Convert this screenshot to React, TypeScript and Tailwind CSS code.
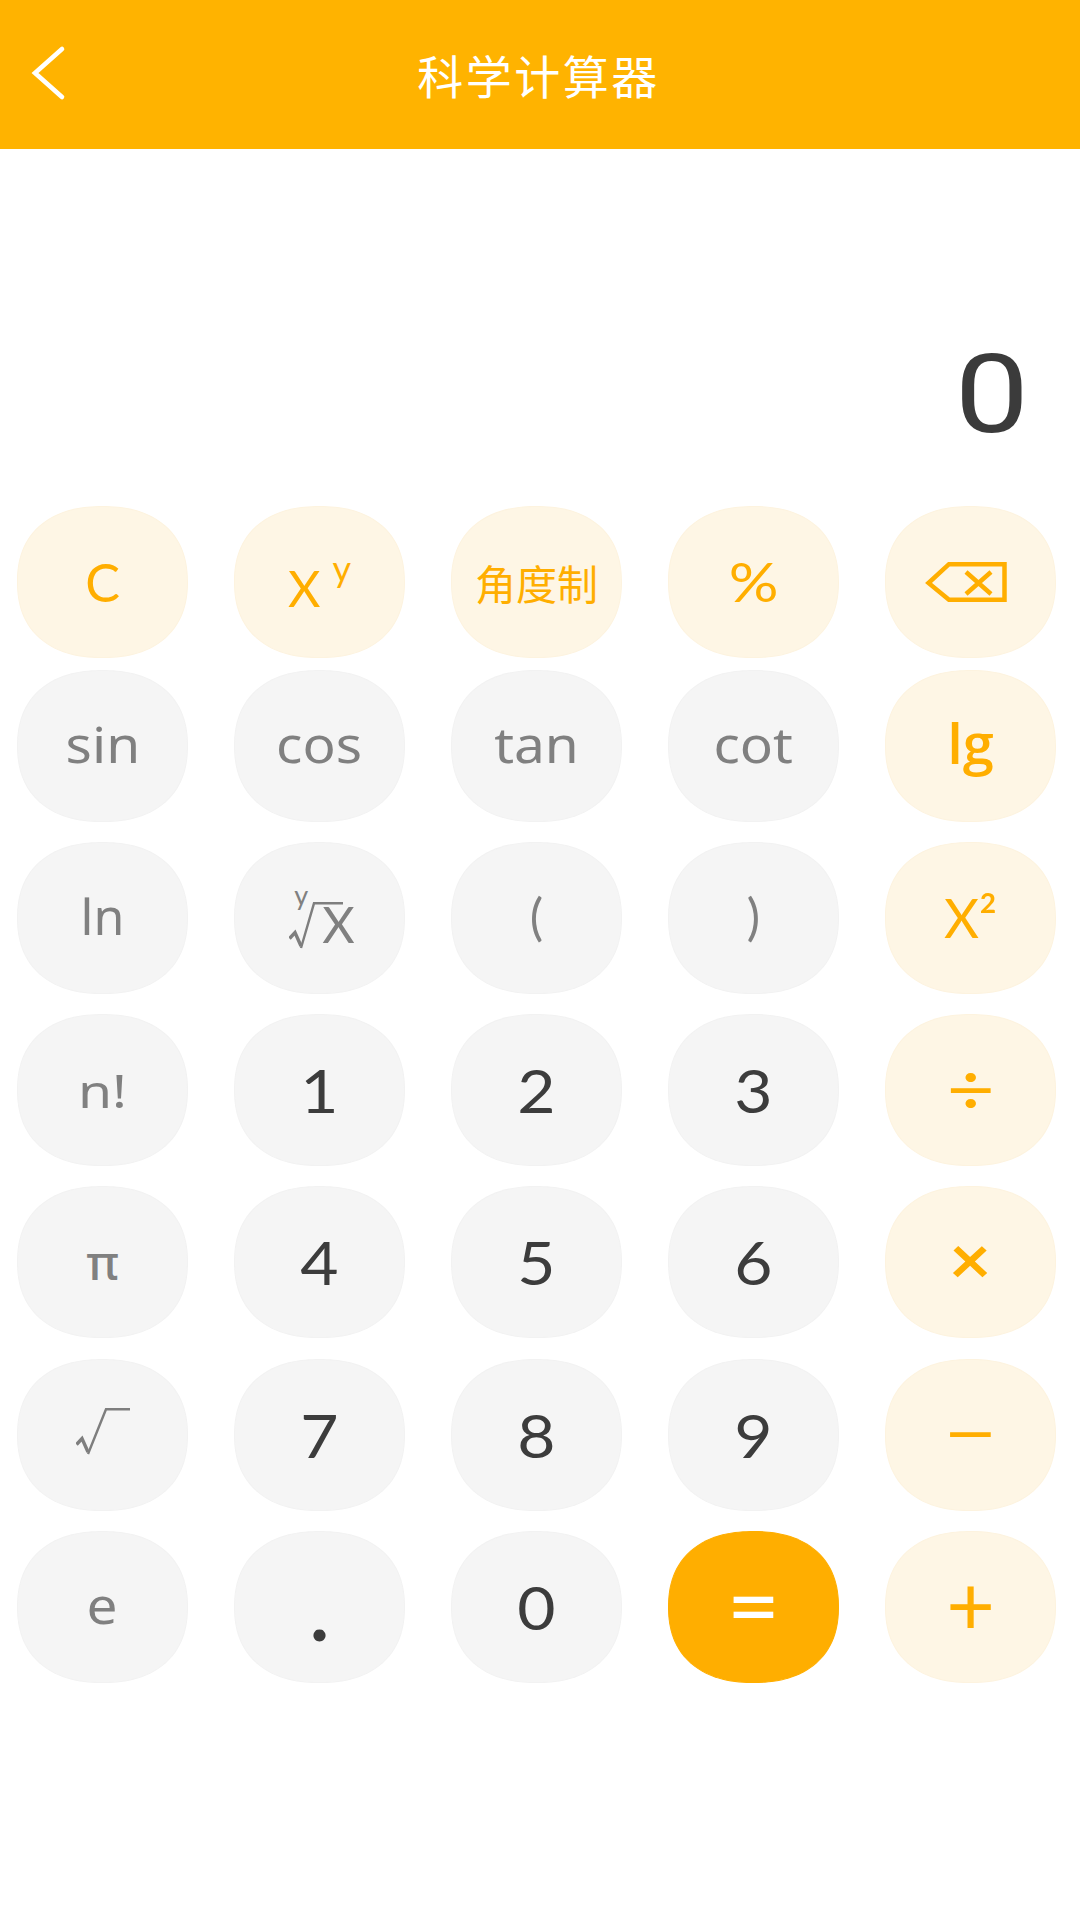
import React from "react";

const base =
  "w-[171px] h-[152px] rounded-[50%] [corner-shape:superellipse(1.2)] flex items-center justify-center border border-[#f2f2f2] leading-none";
const grey = `${base} bg-[#f5f5f5] text-[#808080]`;
const cream = `${base} bg-[#fef6e5] border-[#fdf3df] text-[#ffae00]`;
const dark = `${base} bg-[#f5f5f5] text-[#3c3c3c]`;
const lato = "font-['Lato','Noto_Sans',sans-serif]";
const noto = "font-['Noto_Sans','Lato',sans-serif]";
const open = "font-['Open_Sans','Noto_Sans',sans-serif]";

function Backspace() {
  return (
    <svg className="mr-[9px]" width="82" height="40" viewBox="0 0 82 40" fill="none" stroke="#ffae00" strokeWidth="4.5">
      <path d="M79.5 2.2H24L3.5 21L24 37.8H79.5Z" />
      <path d="M41 10L66 32M66 10L41 32" />
    </svg>
  );
}

function Root({ tick }: { tick: number }) {
  return (
    <svg width="54" height="48" viewBox="0 0 54 48" fill="none" stroke="#7e7e7e">
      <path d="M0.5 36.5L6 30.5L12 44" strokeWidth="3.4" />
      <path d={`M12 46L${tick} 1.3H54`} strokeWidth="2.4" />
    </svg>
  );
}

function Digit({ children }: { children: React.ReactNode }) {
  return (
    <button className={`${dark} ${lato} text-[60px]`}>
      <span className="inline-block scale-x-[1.1]">{children}</span>
    </button>
  );
}

function Wide({ children }: { children: React.ReactNode }) {
  return <span className="inline-block scale-x-[1.1] mb-[4px]">{children}</span>;
}

function App() {
  return (
    <div className="w-[1080px] h-[1920px] bg-white flex flex-col font-['Noto_Sans','Noto_Sans_CJK_SC',sans-serif]">
      <header className="relative h-[149px] bg-[#ffb300] flex items-center justify-center shrink-0">
        <svg className="absolute left-[31px] top-[45px]" width="36" height="56" viewBox="0 0 36 56" fill="none" stroke="#fff" strokeWidth="4.6" strokeLinecap="round">
          <path d="M31 4L4 28L31 52" />
        </svg>
        <h1 className="text-[46px] leading-none tracking-[2.5px] mb-[1px] mr-[3px] text-white font-['Noto_Sans_CJK_SC',sans-serif] font-normal">科学计算器</h1>
      </header>

      <section className="h-[357px] shrink-0 flex items-end justify-end pr-[57px] pb-[71px]">
        <span className="text-[110px] leading-[80px] h-[80px] text-[#3b3b3b] font-['Roboto',sans-serif] inline-block scale-x-[1.2]">0</span>
      </section>

      <main className="flex flex-col pl-[17px]">
        <div className="flex gap-[46px]">
          <button className={`${cream} ${lato} text-[52px]`}>C</button>
          <button className={`${cream} ${lato} text-[50px]`}>
            <span className="mt-[12px]">X</span>
            <span className="text-[36px] ml-[12px] mb-[28px]">y</span>
          </button>
          <button className={`${cream} text-[41px] font-['Noto_Sans_CJK_SC',sans-serif]`}>角度制</button>
          <button className={`${cream} ${lato} text-[54px]`}><span className="inline-block scale-x-[1.15]">%</span></button>
          <button className={cream}><Backspace /></button>
        </div>
        <div className="flex gap-[46px] mt-[12px]">
          <button className={`${grey} ${noto} text-[50px]`}><Wide>sin</Wide></button>
          <button className={`${grey} ${noto} text-[50px]`}><Wide>cos</Wide></button>
          <button className={`${grey} ${noto} text-[50px]`}><Wide>tan</Wide></button>
          <button className={`${grey} ${noto} text-[50px]`}><Wide>cot</Wide></button>
          <button className={`${cream} ${open} text-[56px] font-semibold`}><span className="mb-[8px]">lg</span></button>
        </div>
        <div className="flex gap-[46px] mt-[20px]">
          <button className={`${grey} ${noto} text-[50px]`}><span className="mb-[4px]">ln</span></button>
          <button className={`${grey} ${lato} text-[50px]`}>
            <span className="flex items-end mt-[12px] ml-[5px]">
              <span className="relative flex">
                <span className="absolute left-[5px] top-[-21px] text-[27px]">y</span>
                <Root tick={25} />
              </span>
              <span className="ml-[-21px] mb-[1px]">X</span>
            </span>
          </button>
          <button className={`${grey} ${lato} text-[50px]`}><span className="mb-[4px]">(</span></button>
          <button className={`${grey} ${lato} text-[50px]`}><span className="mb-[4px]">)</span></button>
          <button className={`${cream} ${lato} text-[54px]`}>X²</button>
        </div>
        <div className="flex gap-[46px] mt-[20px]">
          <button className={`${grey} ${noto} text-[46px]`}><span className="inline-block scale-x-[1.2]">n!</span></button>
          <Digit>1</Digit>
          <Digit>2</Digit>
          <Digit>3</Digit>
          <button className={`${cream} ${lato} text-[72px]`}><span className="inline-block scale-x-[1.15] mb-[6px]">÷</span></button>
        </div>
        <div className="flex gap-[46px] mt-[20px]">
          <button className={`${grey} ${noto} text-[48px] font-medium`}>π</button>
          <Digit>4</Digit>
          <Digit>5</Digit>
          <Digit>6</Digit>
          <button className={`${cream} ${lato} text-[66px] font-bold`}><span className="inline-block scale-x-[1.1] mb-[6px]">×</span></button>
        </div>
        <div className="flex gap-[46px] mt-[21px]">
          <button className={grey}><span className="flex mb-[6px]"><Root tick={30} /></span></button>
          <Digit>7</Digit>
          <Digit>8</Digit>
          <Digit>9</Digit>
          <button className={`${cream} ${lato} text-[70px]`}><span className="inline-block scale-x-[1.35] mb-[8px]">−</span></button>
        </div>
        <div className="flex gap-[46px] mt-[20px]">
          <button className={`${grey} ${noto} text-[50px]`}><Wide>e</Wide></button>
          <button className={`${dark} ${lato} text-[80px] pt-[6px] font-bold`}>.</button>
          <Digit>0</Digit>
          <button className={`${base} bg-[#ffae00] border-[#ffae00] text-white ${lato} text-[92px]`}><span className="mb-[8px]">=</span></button>
          <button className={`${cream} ${lato} text-[84px]`}><span className="mb-[8px]">+</span></button>
        </div>
      </main>
    </div>
  );
}

export default App;
